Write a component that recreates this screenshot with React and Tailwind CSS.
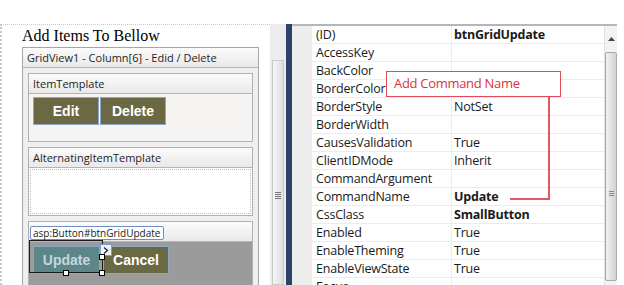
const props = [
  { name: "(ID)", value: "btnGridUpdate", bold: true },
  { name: "AccessKey", value: "" },
  { name: "BackColor", value: "" },
  { name: "BorderColor", value: "" },
  { name: "BorderStyle", value: "NotSet" },
  { name: "BorderWidth", value: "" },
  { name: "CausesValidation", value: "True" },
  { name: "ClientIDMode", value: "Inherit" },
  { name: "CommandArgument", value: "" },
  { name: "CommandName", value: "Update", bold: true },
  { name: "CssClass", value: "SmallButton", bold: true },
  { name: "Enabled", value: "True" },
  { name: "EnableTheming", value: "True" },
  { name: "EnableViewState", value: "True" },
  { name: "Focus", value: "" },
];

const SectionHeader = ({ children }) => (
  <div className="h-[20px] flex items-center px-[4px] border-b border-[#b4b4b4] bg-gradient-to-b from-[#fbfbfb] to-[#e9e9e9] text-[11px] text-[#1e1e1e] leading-none">
    {children}
  </div>
);

const OliveButton = ({ children }) => (
  <button className="w-[66px] h-[28px] bg-[#6b6944] border border-[#8fa6c8] text-white font-bold text-[14px] font-['Liberation_Sans',sans-serif]">
    {children}
  </button>
);

function LeftPanel() {
  return (
    <div className="w-[270px] h-full border-t border-l-2 border-dotted border-[#c8c8c8] pl-[20px] font-['Open_Sans',sans-serif]">
      <div className="h-[22px] pt-[1px] text-[16px] leading-[20px] text-black font-['Liberation_Serif',serif]">
        Add Items To Bellow
      </div>
      <div className="w-[237px] border border-[#a6a6a6] bg-[#efefef]">
        <SectionHeader>GridView1 - Column[6] - Edid / Delete</SectionHeader>
        <div className="p-[5px] flex flex-col gap-[5px]">
          <div className="border border-[#b0b0b0] bg-[#f5f4f2]">
            <SectionHeader>ItemTemplate</SectionHeader>
            <div className="h-[47px] pt-[3px] pl-[4px] flex gap-[1px] items-start">
              <OliveButton>Edit</OliveButton>
              <OliveButton>Delete</OliveButton>
            </div>
          </div>
          <div className="border border-[#b0b0b0] bg-white">
            <SectionHeader>AlternatingItemTemplate</SectionHeader>
            <div className="h-[47px] p-[1px]">
              <div className="h-full border border-dotted border-[#bdbdbd]" />
            </div>
          </div>
          <div className="border border-[#b0b0b0] bg-[#9b9b9b]">
            <SectionHeader>EditItemTemplate</SectionHeader>
            <div className="h-[60px] pt-[4px] pl-[4px] flex gap-[3px] items-start">
              <button className="w-[67px] h-[28px] bg-[#5d8689] border border-[#8fa6c8] text-[#c4d6de] font-bold text-[14px] font-['Liberation_Sans',sans-serif]">
                Update
              </button>
              <OliveButton>Cancel</OliveButton>
            </div>
          </div>
        </div>
      </div>
    </div>
  );
}

function Splitter() {
  return (
    <div className="w-[16px] h-full flex flex-col bg-[#ececec]">
      <div className="h-[36px]" />
      <div className="flex-1 mx-[2px] border border-[#c9c9c9] bg-gradient-to-r from-[#f6f6f6] to-[#dedede] flex flex-col items-center pt-[131px]">
        <div className="flex flex-col gap-[1px]">
          <div className="w-[6px] h-[1px] bg-[#777]" />
          <div className="w-[6px] h-[1px] bg-[#777]" />
          <div className="w-[6px] h-[1px] bg-[#777]" />
          <div className="w-[6px] h-[1px] bg-[#777]" />
        </div>
      </div>
    </div>
  );
}

function PropertyGrid() {
  return (
    <div className="flex h-full border-t-2 border-[#b2b6be] font-['Open_Sans',sans-serif]">
      <div className="w-[20px] bg-[#ededed]" />
      <div className="w-[292px] bg-white">
        {props.map((p) => (
          <div key={p.name} className="flex h-[18px] border-b border-[#ececec] text-[12.5px] leading-[17px] text-[#1a1a1a]">
            <div className="w-[140px] pl-[4px] border-r border-[#ececec] tracking-[-0.2px]">{p.name}</div>
            <div className={`flex-1 pl-[2px] tracking-[-0.2px] ${p.bold ? "font-bold" : ""}`}>{p.value}</div>
          </div>
        ))}
      </div>
      <div className="w-[13px] bg-[#f3f3f3] flex flex-col border-l border-[#e2e2e2]">
        <div className="h-[26px] flex items-center justify-center">
          <svg width="7" height="4" viewBox="0 0 7 4">
            <path d="M0 4 L3.5 0 L7 4 Z" fill="#444" />
          </svg>
        </div>
        <div className="flex-1 mb-[4px] border border-[#a9a9a9] rounded-[2px] bg-gradient-to-r from-[#f2f2f2] to-[#d2d2d2] flex flex-col items-center pt-[138px]">
          <div className="flex flex-col gap-[1px]">
            <div className="w-[5px] h-[1px] bg-[#888]" />
            <div className="w-[5px] h-[1px] bg-[#888]" />
            <div className="w-[5px] h-[1px] bg-[#888]" />
          </div>
        </div>
      </div>
    </div>
  );
}

export default function App() {
  return (
    <div className="relative w-[624px] h-[285px] overflow-hidden bg-white">
      <div className="h-[24px]" />
      <div className="flex h-[261px]">
        <LeftPanel />
        <Splitter />
        <div className="w-[6px] h-full bg-[#2d4268]" />
        <PropertyGrid />
        <div className="flex-1 bg-white" />
      </div>

      {/* callout */}
      <div className="absolute left-[386px] top-[71px] w-[175px] h-[26px] border border-[#e14a58] bg-white flex items-center pl-[7px] text-[13px] tracking-[-0.3px] text-[#e0303f] font-['Open_Sans',sans-serif]">
        Add Command Name
      </div>
      <div className="absolute left-[548px] top-[97px] w-[2px] h-[103px] bg-[#e45563]" />
      <div className="absolute left-[510px] top-[198px] w-[40px] h-[2px] bg-[#e45563]" />

      {/* designer selection */}
      <div className="absolute left-[29px] top-[240px] w-[74px] h-[33px] border-[1.5px] border-[#1a1a1a]" />
      <div className="absolute left-[30px] top-[226px] w-[134px] px-[2px] h-[14px] bg-white border border-[#6f8fc4] rounded-[2px] text-[10px] leading-[12px] text-[#222] font-['Open_Sans',sans-serif] whitespace-nowrap">
        asp:Button#btnGridUpdate
      </div>
      <div className="absolute left-[100px] top-[244px] w-[12px] h-[12px] bg-[#eef3fb] border border-[#7f9cc8] flex items-center justify-center">
        <svg width="6" height="7" viewBox="0 0 6 7">
          <path d="M1 0.5 L4.5 3.5 L1 6.5" stroke="#222" strokeWidth="1.2" fill="none" />
        </svg>
      </div>
      <div className="absolute left-[63px] top-[270px] w-[6px] h-[6px] bg-white border border-black" />
      <div className="absolute left-[99px] top-[270px] w-[6px] h-[6px] bg-white border border-black" />
      <div className="absolute left-[99px] top-[254px] w-[6px] h-[6px] bg-white border border-black" />
    </div>
  );
}
